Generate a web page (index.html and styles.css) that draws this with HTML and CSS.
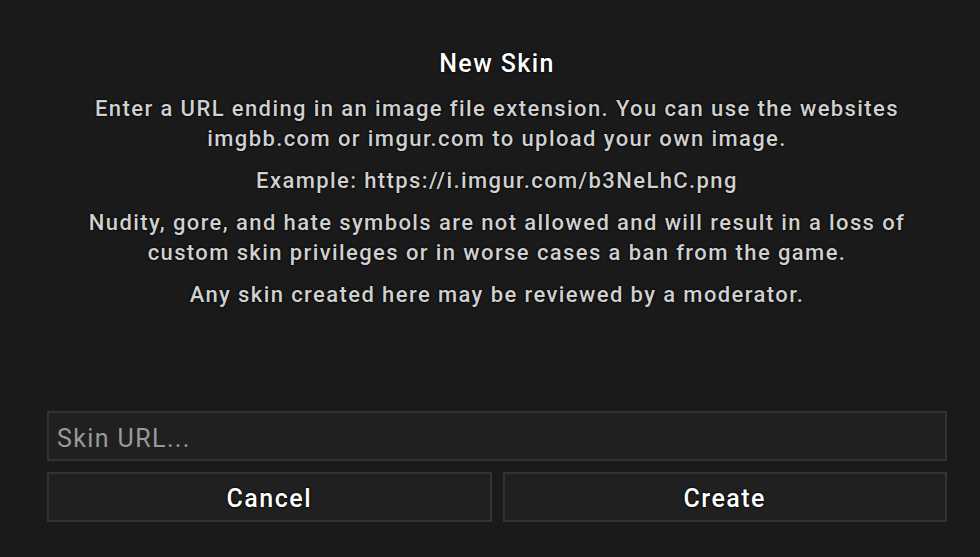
FILE: index.html
```html
<!DOCTYPE html>
<html>
<head>
<meta charset="utf-8">
<link rel="stylesheet" href="styles.css">
</head>
<body>
<div class="dialog">
  <div class="content">
    <h1 class="title">New Skin</h1>
    <p class="para">Enter a URL ending in an image file extension. You can use the websites<br>imgbb.com or imgur.com to upload your own image.</p>
    <p class="para">Example: https://i.imgur.com/b3NeLhC.png</p>
    <p class="para">Nudity, gore, and hate symbols are not allowed and will result in a loss of<br>custom skin privileges or in worse cases a ban from the game.</p>
    <p class="para">Any skin created here may be reviewed by a moderator.</p>
  </div>
  <div class="form">
    <input class="url" type="text" placeholder="Skin URL...">
    <div class="buttons">
      <button class="btn">Cancel</button>
      <button class="btn">Create</button>
    </div>
  </div>
</div>
</body>
</html>
```
FILE: styles.css
```css
html, body {
  margin: 0;
  padding: 0;
  background: #1a1a1a;
  width: 980px;
  height: 557px;
  overflow: hidden;
}
.dialog {
  box-sizing: border-box;
  width: 980px;
  height: 557px;
  padding: 47px 33px 35px 47px;
  display: flex;
  flex-direction: column;
  justify-content: space-between;
  font-family: Roboto, "Liberation Sans", sans-serif;
}
.content {
  display: flex;
  flex-direction: column;
  align-items: center;
  text-align: center;
}
.title {
  margin: 0 0 14px 0;
  font-size: 25px;
  line-height: 33px;
  font-weight: 500;
  letter-spacing: 1.4px;
  color: #ffffff;
  text-shadow: 0 0 2px #000, 0 0 2px #000;
}
.para {
  margin: 0 0 12px 0;
  font-size: 22px;
  line-height: 30px;
  font-weight: 500;
  letter-spacing: 1.4px;
  color: #d0d0d0;
  text-shadow: 0 0 2px #000, 0 0 2px #000;
}
.form {
  display: flex;
  flex-direction: column;
  gap: 11px;
}
.url {
  box-sizing: border-box;
  height: 50px;
  width: 100%;
  background: #202020;
  border: 2px solid #333333;
  color: #ddd;
  font-family: inherit;
  font-size: 25px;
  letter-spacing: 1.4px;
  padding: 4px 8px 0 8px;
  outline: none;
}
.url::placeholder {
  color: #9a9a9a;
}
.buttons {
  display: grid;
  grid-template-columns: 1fr 1fr;
  gap: 11px;
}
.btn {
  box-sizing: border-box;
  height: 50px;
  background: #202020;
  border: 2px solid #333333;
  color: #ffffff;
  font-family: inherit;
  font-size: 25px;
  font-weight: 500;
  letter-spacing: 1.5px;
  text-shadow: 0 0 2px #000, 0 0 2px #000;
  padding: 3px 0 0 0;
}
```
